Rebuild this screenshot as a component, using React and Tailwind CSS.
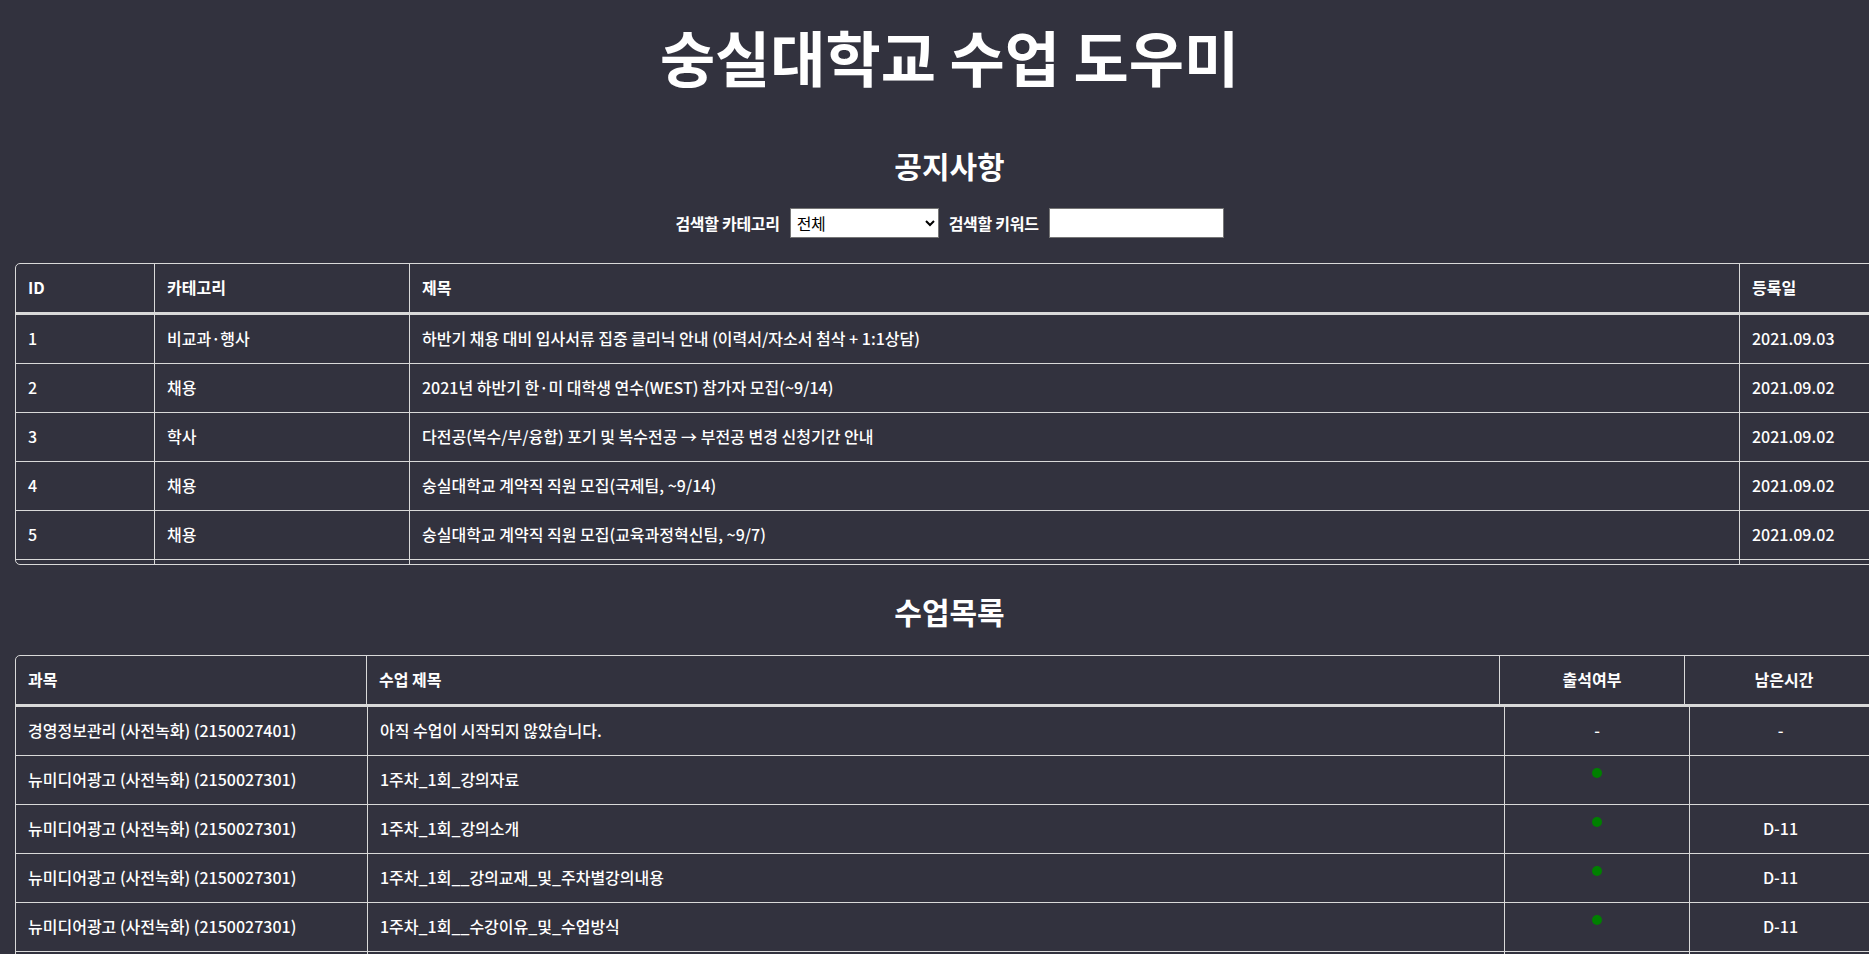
import { useState } from 'react'

const NOTICES = [
  { id: 1, category: '비교과·행사', title: '하반기 채용 대비 입사서류 집중 클리닉 안내 (이력서/자소서 첨삭 + 1:1상담)', date: '2021.09.03' },
  { id: 2, category: '채용', title: '2021년 하반기 한·미 대학생 연수(WEST) 참가자 모집(~9/14)', date: '2021.09.02' },
  { id: 3, category: '학사', title: '다전공(복수/부/융합) 포기 및 복수전공 → 부전공 변경 신청기간 안내', date: '2021.09.02' },
  { id: 4, category: '채용', title: '숭실대학교 계약직 직원 모집(국제팀, ~9/14)', date: '2021.09.02' },
  { id: 5, category: '채용', title: '숭실대학교 계약직 직원 모집(교육과정혁신팀, ~9/7)', date: '2021.09.02' },
]

const LECTURES = [
  { subject: '경영정보관리 (사전녹화) (2150027401)', title: '아직 수업이 시작되지 않았습니다.', attended: null, left: '-' },
  { subject: '뉴미디어광고 (사전녹화) (2150027301)', title: '1주차_1회_강의자료', attended: true, left: '' },
  { subject: '뉴미디어광고 (사전녹화) (2150027301)', title: '1주차_1회_강의소개', attended: true, left: 'D-11' },
  { subject: '뉴미디어광고 (사전녹화) (2150027301)', title: '1주차_1회__강의교재_및_주차별강의내용', attended: true, left: 'D-11' },
  { subject: '뉴미디어광고 (사전녹화) (2150027301)', title: '1주차_1회__수강이유_및_수업방식', attended: true, left: 'D-11' },
]

const CATEGORIES = ['전체', '학사', '채용', '비교과·행사', '장학', '국제교류']

function Cell({ children, last, center, bold }) {
  return (
    <div className={`flex items-center px-3 pb-[3px] whitespace-nowrap overflow-hidden ${last ? '' : 'border-r border-[#d9d9d9]'} ${center ? 'justify-center' : ''} ${bold ? 'font-bold' : ''}`}>
      {children}
    </div>
  )
}

function NoticeTable() {
  return (
    <div className="mt-[25px] h-[302px] overflow-hidden rounded-[5px] border border-[#d9d9d9]">
      <div className="grid grid-cols-[139px_255px_1330px_1fr] h-[51px] border-b-[3px] border-[#d9d9d9]">
        <Cell bold>ID</Cell>
        <Cell bold>카테고리</Cell>
        <Cell bold>제목</Cell>
        <Cell bold last>등록일</Cell>
      </div>
      {NOTICES.map(n => (
        <div key={n.id} className="grid grid-cols-[139px_255px_1330px_1fr] h-[49px] border-b border-[#d9d9d9]">
          <Cell>{n.id}</Cell>
          <Cell>{n.category}</Cell>
          <Cell>{n.title}</Cell>
          <Cell last>{n.date}</Cell>
        </div>
      ))}
      {/* next row, scrolled out of view */}
      <div className="grid grid-cols-[139px_255px_1330px_1fr] h-[49px]">
        <Cell />
        <Cell />
        <Cell />
        <Cell last />
      </div>
    </div>
  )
}

function LectureTable() {
  return (
    <div className="mt-[29px] rounded-[5px] border border-[#d9d9d9]">
      {/* header */}
      <div className="grid grid-cols-[351px_1133px_185px_1fr] h-[51px] border-b-[3px] border-[#d9d9d9]">
        <Cell bold>과목</Cell>
        <Cell bold>수업 제목</Cell>
        <Cell bold center>출석여부</Cell>
        <Cell bold center last>남은시간</Cell>
      </div>
      {/* body */}
      {LECTURES.map((l, i) => (
        <div key={i} className="grid grid-cols-[352px_1137px_185px_181px] h-[49px] border-b border-[#d9d9d9]">
          <Cell>{l.subject}</Cell>
          <Cell>{l.title}</Cell>
          <Cell center>
            {l.attended === null
              ? '-'
              : <span className={`w-2.5 h-2.5 mb-3 rounded-full ${l.attended ? 'bg-[#008000]' : 'bg-[#c00000]'}`} />}
          </Cell>
          <Cell center last>{l.left}</Cell>
        </div>
      ))}
      <div className="grid grid-cols-[352px_1137px_185px_181px] h-[49px]">
        <Cell />
        <Cell />
        <Cell />
        <Cell last />
      </div>
    </div>
  )
}

export default function App() {
  const [category, setCategory] = useState('전체')
  const [keyword, setKeyword]   = useState('')

  return (
    <div className="h-screen overflow-hidden bg-[#32323e] text-white text-[16px] font-medium font-['Noto_Sans_CJK_KR','Noto_Sans',sans-serif]">
      <div className="w-[calc(100%+30px)] px-[15px] pt-[26px]">
        <h1 className="text-center text-[60px] leading-none font-bold">
          숭실대학교 수업 도우미
        </h1>

        <h2 className="mt-[64px] text-center text-[30px] leading-none font-bold">
          공지사항
        </h2>

        <div className="mt-[28px] flex items-center justify-center gap-[10px] font-bold tracking-[-0.3px]">
          <span>검색할 카테고리</span>
          <select
            value={category}
            onChange={e => setCategory(e.target.value)}
            className="h-[30px] w-[149px] bg-white text-black font-normal border border-[#767676] pl-[2px]"
          >
            {CATEGORIES.map(c => <option key={c} value={c}>{c}</option>)}
          </select>
          <span>검색할 키워드</span>
          <input
            type="text"
            value={keyword}
            onChange={e => setKeyword(e.target.value)}
            className="h-[30px] w-[175px] bg-white text-black font-normal border border-[#767676] px-1"
          />
        </div>

        <NoticeTable />

        <h2 className="mt-[31px] text-center text-[30px] leading-none font-bold">
          수업목록
        </h2>

        <LectureTable />
      </div>
    </div>
  )
}
